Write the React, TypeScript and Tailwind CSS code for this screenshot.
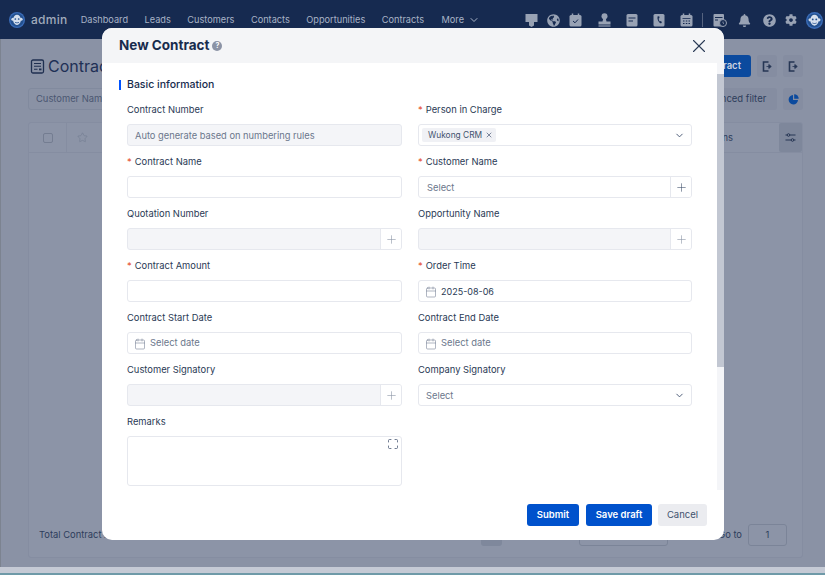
import { useState } from 'react';
import { Calendar, ChevronDown, Maximize, Plus, Star, X } from 'lucide-react';
import { FaBell, FaCog, FaGlobeAmericas, FaQuestionCircle } from 'react-icons/fa';

const navItems = ['Dashboard', 'Leads', 'Customers', 'Contacts', 'Opportunities', 'Contracts'];

const NAV_ICON = '#98a2b4';
const NAV_BG = '#162a50';

function MonkeyLogo({ size, className }: { size: number; className?: string }) {
  return (
    <svg width={size} height={size} viewBox="0 0 24 24" className={`shrink-0 ${className ?? ''}`}>
      <circle cx="12" cy="12" r="12" fill="#3a6cb8" />
      <circle cx="12" cy="12" r="10" fill="#23508f" />
      <circle cx="5.800" cy="11" r="2.300" fill="#d5dfee" />
      <circle cx="18.200" cy="11" r="2.300" fill="#d5dfee" />
      <path d="M6.500 10c0-3.500 2.500-6 5.500-6s5.500 2.500 5.500 6c1 3-.5 8.500-5.500 9.500-5-1-6.500-6.500-5.500-9.500z" fill="#d5dfee" />
      <circle cx="9.500" cy="10.500" r="1.300" fill="#23508f" />
      <circle cx="14.500" cy="10.500" r="1.300" fill="#23508f" />
      <path d="M9 15.500c2 1 4 1 6 0" stroke="#23508f" strokeWidth="1.200" fill="none" />
    </svg>
  );
}

function PinIcon({ className }: { className?: string }) {
  return (
    <svg width="13" height="14" viewBox="0 0 13 14" className={className}>
      <path d="M.5 1h12v8H9v3.500L6.500 14 4 12.500V9H.5z" fill={NAV_ICON} />
    </svg>
  );
}

function CalendarCheckIcon({ className }: { className?: string }) {
  return (
    <svg width="13" height="14" viewBox="0 0 13 14" className={className}>
      <rect x="0.500" y="2" width="12" height="11.500" rx="1.500" fill={NAV_ICON} />
      <path d="M3.500 .5v3M9.500 .5v3" stroke={NAV_ICON} strokeWidth="1.500" />
      <path d="M4 8l2 1.800L9 6.500" stroke={NAV_BG} strokeWidth="1" fill="none" />
    </svg>
  );
}

function StampIcon({ className }: { className?: string }) {
  return (
    <svg width="13" height="14" viewBox="0 0 13 14" className={className}>
      <circle cx="6.500" cy="3.200" r="3" fill={NAV_ICON} />
      <path d="M5.200 5.500h2.600L8.500 8.500H12.500v3H.5v-3h4z" fill={NAV_ICON} />
      <path d="M.5 13h12" stroke={NAV_ICON} strokeWidth="1.200" />
    </svg>
  );
}

function NoteIcon({ className }: { className?: string }) {
  return (
    <svg width="12" height="14" viewBox="0 0 12 14" className={className}>
      <rect x="0.500" y="1" width="11" height="12.500" rx="1.500" fill={NAV_ICON} />
      <path d="M2.500 5h7M2.500 8h4.500" stroke={NAV_BG} strokeWidth="1.200" />
    </svg>
  );
}

function PhoneBookIcon({ className }: { className?: string }) {
  return (
    <svg width="12" height="14" viewBox="0 0 12 14" className={className}>
      <rect x="0.500" y="1" width="11" height="12.500" rx="1.500" fill={NAV_ICON} />
      <path d="M4.500 3.500c-.5 3 1 6 3.500 7l1-1.500-1.500-1-.8.500c-.7-.8-1-1.800-1-3l.8-.4-.3-1.800z" fill={NAV_BG} />
    </svg>
  );
}

function CalendarGridIcon({ className }: { className?: string }) {
  return (
    <svg width="13" height="14" viewBox="0 0 13 14" className={className}>
      <rect x="0.500" y="2" width="12" height="11.500" rx="1.500" fill={NAV_ICON} />
      <path d="M3.500 .5v3M9.500 .5v3" stroke={NAV_ICON} strokeWidth="1.500" />
      <path d="M2.500 5.500h8" stroke={NAV_BG} strokeWidth=".8" />
      <path d="M3 8h1.500M5.800 8h1.500M8.500 8h1.500M3 10.500h1.500M5.800 10.500h1.500M8.500 10.500h1.500" stroke={NAV_BG} strokeWidth="1" />
    </svg>
  );
}

function ScheduleDocIcon({ className }: { className?: string }) {
  return (
    <svg width="14" height="14" viewBox="0 0 14 14" className={className}>
      <rect x="0.500" y="1" width="10.500" height="12.500" rx="1" fill={NAV_ICON} />
      <path d="M2 4.500h7.500M2 7h3" stroke={NAV_BG} strokeWidth="1" />
      <circle cx="10" cy="10" r="3.500" fill={NAV_BG} stroke={NAV_ICON} strokeWidth="1" />
      <path d="M10 8.500V10l1 .8" stroke={NAV_ICON} strokeWidth=".8" fill="none" />
    </svg>
  );
}

function ContractDocIcon() {
  return (
    <svg width="15" height="15" viewBox="0 0 15 15" className="shrink-0">
      <rect x="1.500" y="1" width="12" height="13" rx="1.500" fill="none" stroke="#1f2f50" strokeWidth="1.300" />
      <path d="M4 4.500h7M4 7.300h7M4 10.200h3.500" stroke="#1f2f50" strokeWidth="1.100" />
      <rect x="9" y="9.500" width="2.500" height="1.800" fill="#1f2f50" />
    </svg>
  );
}

function ExportIcon() {
  return (
    <svg width="11" height="11" viewBox="0 0 11 11">
      <path d="M6.500 1H1.500v9h5" fill="none" stroke="#263654" strokeWidth="1.600" />
      <path d="M4.500 5.500h3M6.800 3.500l2.500 2-2.500 2z" fill="#263654" stroke="#263654" strokeWidth=".8" />
    </svg>
  );
}

function PieIcon() {
  return (
    <svg width="11" height="11" viewBox="0 0 11 11">
      <path d="M5 1a4.700 4.700 0 1 0 5 5H5z" fill="#0b4a9e" />
      <path d="M6.200 0.300a4.500 4.500 0 0 1 4.500 4.500H6.200z" fill="#0b4a9e" />
    </svg>
  );
}

function SlidersIcon() {
  return (
    <svg width="11" height="11" viewBox="0 0 11 11" fill="none" stroke="#263654" strokeWidth="1">
      <path d="M.5 3h10M.5 8h10" />
      <circle cx="3.500" cy="3" r="1.300" fill="#7e879b" />
      <circle cx="7.500" cy="8" r="1.300" fill="#7e879b" />
    </svg>
  );
}

function Label({ text, required }: { text: string; required?: boolean }) {
  return (
    <div className="h-[15px] mb-[6px] text-[9.400px] leading-[14px] text-[#2a3a55] whitespace-nowrap">
      {required && <span className="text-[#e5532d] mr-[3px]">*</span>}
      {text}
    </div>
  );
}

function PlusAddon({ dark }: { dark?: boolean }) {
  return (
    <div className="w-[21px] h-full flex items-center justify-center bg-white border-l border-[#e6e8ee] shrink-0">
      <Plus size={13} strokeWidth={1.100} className={dark ? 'text-[#42526e]' : 'text-[#8a94a6]'} />
    </div>
  );
}

function Field({ className, children }: { className?: string; children?: React.ReactNode }) {
  return (
    <div className={`h-[22px] rounded-[3px] border border-[#e6e8ee] flex items-center overflow-hidden ${className ?? 'bg-white'}`}>
      {children}
    </div>
  );
}

function DateField({ value }: { value?: string }) {
  return (
    <Field>
      <Calendar size={12} strokeWidth={1.200} className="ml-[6px] mt-[1px] text-[#7a8598]" />
      <span className={`ml-[4px] mt-[1px] ${value ? 'text-[9px] text-[#2a3a55]' : 'text-[9.400px] text-[#6b778c]'}`}>{value ?? 'Select date'}</span>
    </Field>
  );
}

function FormGrid() {
  const [remarks, setRemarks] = useState('');

  return (
    <div className="grid grid-cols-[275px_274px] gap-x-[16px] gap-y-[9px]">
      <div>
        <Label text="Contract Number" />
        <Field className="bg-[#f4f5f8]">
          <span className="ml-[7px] mt-[1px] text-[9.300px] text-[#6b778c]">Auto generate based on numbering rules</span>
        </Field>
      </div>
      <div>
        <Label text="Person in Charge" required />
        <Field>
          <span className="ml-[3px] h-[14px] pl-[6px] pr-[3px] rounded-[2px] bg-[#f0f1f5] flex items-center gap-[3px] text-[8.400px] text-[#42526e]">
            Wukong CRM <X size={8} />
          </span>
          <ChevronDown size={11} className="ml-auto mr-[6px] text-[#42526e]" />
        </Field>
      </div>

      <div>
        <Label text="Contract Name" required />
        <Field />
      </div>
      <div>
        <Label text="Customer Name" required />
        <Field>
          <span className="ml-[8px] mt-[1px] text-[9.300px] text-[#6b778c] flex-1">Select</span>
          <PlusAddon dark />
        </Field>
      </div>

      <div>
        <Label text="Quotation Number" />
        <Field className="bg-[#f4f5f8] justify-end">
          <PlusAddon />
        </Field>
      </div>
      <div>
        <Label text="Opportunity Name" />
        <Field className="bg-[#f4f5f8] justify-end">
          <PlusAddon />
        </Field>
      </div>

      <div>
        <Label text="Contract Amount" required />
        <Field />
      </div>
      <div>
        <Label text="Order Time" required />
        <DateField value="2025-08-06" />
      </div>

      <div>
        <Label text="Contract Start Date" />
        <DateField />
      </div>
      <div>
        <Label text="Contract End Date" />
        <DateField />
      </div>

      <div>
        <Label text="Customer Signatory" />
        <Field className="bg-[#f4f5f8] justify-end">
          <PlusAddon />
        </Field>
      </div>
      <div>
        <Label text="Company Signatory" />
        <Field>
          <span className="ml-[7px] mt-[1px] text-[9.300px] text-[#6b778c]">Select</span>
          <ChevronDown size={11} className="ml-auto mr-[6px] text-[#42526e]" />
        </Field>
      </div>

      <div>
        <Label text="Remarks" />
        <div className="relative h-[50px] rounded-[3px] border border-[#e6e8ee]">
          <textarea
            value={remarks}
            onChange={(e) => setRemarks(e.target.value)}
            className="block w-full h-full resize-none outline-none text-[10px] p-[6px]"
          />
          <Maximize size={12} strokeWidth={1.500} className="absolute top-[1px] right-[2px] text-[#42526e]" />
        </div>
      </div>
    </div>
  );
}

function NewContractDialog() {
  return (
    <div className="absolute left-[102px] top-[28px] w-[622px] h-[512px] bg-white rounded-[10px] overflow-hidden flex flex-col">
      {/* Header */}
      <div className="h-[35px] shrink-0 bg-[#f4f5f7] flex items-center pl-[17px] pr-[14px]">
        <span className="text-[13.500px] font-bold text-[#172b4d]">New Contract</span>
        <span className="ml-[3px] mt-[1px] w-[10px] h-[10px] rounded-full bg-[#8b93a5] text-white text-[7px] font-bold flex items-center justify-center">?</span>
        <X size={22} strokeWidth={1.200} className="ml-auto text-[#2a3a55]" />
      </div>

      {/* Body with scrollbar */}
      <div className="h-[427px] shrink-0 flex">
        <div className="flex-1 pl-[17px] pt-[15px]">
          <div className="flex items-center h-[13px] mb-[12px]">
            <div className="w-[2px] h-[10px] bg-[#0052ff] mr-[6px]" />
            <span className="text-[10.500px] font-medium text-[#172b4d]">Basic information</span>
          </div>
          <div className="ml-[8px]">
            <FormGrid />
          </div>
        </div>
        <div className="w-[7px] bg-[#f4f5f8]">
          <div className="mt-[11px] h-[293px] bg-[#c2c7d2]" />
        </div>
      </div>

      {/* Footer */}
      <div className="flex-1 flex items-start justify-end pr-[17px] pt-[14px]">
        <button className="w-[52px] h-[22px] rounded-[3px] bg-[#0052cc] text-white text-[9.500px] font-semibold">Submit</button>
        <button className="ml-[7px] w-[66px] h-[22px] rounded-[3px] bg-[#0052cc] text-white text-[9.500px] font-semibold">Save draft</button>
        <button className="ml-[6px] w-[49px] h-[22px] rounded-[3px] bg-[#ebecf0] text-[#42526e] text-[9.500px]">Cancel</button>
      </div>
    </div>
  );
}

function TopNav() {
  return (
    <div className="h-[39px] shrink-0 bg-[#162a50] flex items-center pl-[9px] pr-[2px] pt-[1px]">
      <MonkeyLogo size={16} />
      <span className="ml-[6px] text-[12px] font-medium text-[#a0aabb] tracking-[0.3px]">admin</span>
      <div className="ml-[13px] flex gap-[16.500px] text-[9.200px] text-[#a8b3c6]">
        {navItems.map((item) => (
          <span key={item}>{item}</span>
        ))}
        <span className="flex items-center gap-[4px] ml-[1px]">
          More <ChevronDown size={12} />
        </span>
      </div>
      <div className="ml-auto flex items-center">
        <PinIcon />
        <FaGlobeAmericas size={13} color={NAV_ICON} className="ml-[9px]" />
        <CalendarCheckIcon className="ml-[9px]" />
        <StampIcon className="ml-[16px]" />
        <NoteIcon className="ml-[15px]" />
        <PhoneBookIcon className="ml-[15px]" />
        <CalendarGridIcon className="ml-[15px]" />
        <div className="ml-[9px] w-px h-[14px] bg-[#55637f]" />
        <ScheduleDocIcon className="ml-[10px]" />
        <FaBell size={13} color={NAV_ICON} className="ml-[11px]" />
        <FaQuestionCircle size={13} color={NAV_ICON} className="ml-[12px]" />
        <FaCog size={12} color={NAV_ICON} className="ml-[9px]" />
        <MonkeyLogo size={17} className="ml-[9px]" />
      </div>
    </div>
  );
}

function BackgroundPage() {
  return (
    <div className="flex-1 pl-[28px] pr-[22px] text-[#2e3d5c]">
      {/* Title row */}
      <div className="h-[44px] flex items-start justify-between pt-[16px]">
        <div className="flex items-center gap-[3px] -mt-[1px] ml-[2px]">
          <ContractDocIcon />
          <span className="text-[16px] text-[#1f3055]">Contracts</span>
        </div>
        <div className="flex items-center gap-[6px]">
          <div className="h-[22px] px-[10px] rounded-[3px] bg-[#0b4a9e] text-[#c9d2e0] text-[9.500px] font-semibold flex items-center">New Contract</div>
          <div className="w-[20px] h-[22px] rounded-[3px] bg-[#858da1] flex items-center justify-center">
            <ExportIcon />
          </div>
          <div className="w-[20px] h-[22px] rounded-[3px] bg-[#858da1] flex items-center justify-center">
            <ExportIcon />
          </div>
        </div>
      </div>

      {/* Filter row */}
      <div className="h-[39px] flex items-start justify-between pt-[5px]">
        <div className="w-[200px] h-[22px] rounded-[3px] border border-[#818a9e] text-[9.400px] text-[#4a5772] pl-[7px] pt-[1px] flex items-center">Customer Name</div>
        <div className="flex items-center gap-[6px]">
          <div className="w-[90px] h-[22px] rounded-[3px] bg-[#858da1] text-[9.500px] flex items-center justify-center">Advanced filter</div>
          <div className="w-[20px] h-[22px] rounded-[3px] bg-[#858da1] flex items-center justify-center">
            <PieIcon />
          </div>
        </div>
      </div>

      {/* Table card */}
      <div className="h-[436px] rounded-[3px] border border-[#858da1] bg-[#8c94a7] flex flex-col">
        <div className="h-[30px] shrink-0 flex items-center justify-between border-b border-[#858da1]">
          <div className="flex items-center h-full">
            <div className="w-[38px] h-full flex items-center justify-center border-r border-[#858da1]">
              <div className="w-[10px] h-[10px] rounded-[2px] border border-[#747d91]" />
            </div>
            <div className="w-[30px] flex justify-center">
              <Star size={11} className="text-[#7a8397]" />
            </div>
          </div>
          <div className="flex items-center">
            <span className="text-[9.400px] mt-[2px] mr-[46px]">Actions</span>
            <div className="w-[23px] h-[29px] rounded-[2px] bg-[#7e879b] flex items-center justify-center">
              <SlidersIcon />
            </div>
          </div>
        </div>
        <div className="mt-auto mb-[11px] flex items-center pl-[10px] pr-[15px] text-[9.400px]">
          <span className="w-[442px] mt-[1px] whitespace-nowrap overflow-hidden">Total Contract Amount: 0.00, Received Amount: 0.00, Pending Amount: 0.00</span>
          <span className="w-[21px] h-[22px] rounded-[3px] bg-[#7f889c] flex items-center justify-center">1</span>
          <span className="ml-[77px] w-[89px] h-[22px] rounded-[3px] border border-[#7b8498] flex items-center pl-[8px]">15/page</span>
          <span className="ml-auto flex items-center gap-[6px]">
            Go to
            <span className="w-[39px] h-[22px] rounded-[3px] border border-[#7b8498] flex items-center justify-center">1</span>
          </span>
        </div>
      </div>
    </div>
  );
}

export default function App() {
  return (
    <div className="relative w-[825px] h-[575px] overflow-hidden bg-[#8a92a5] shadow-[inset_1px_0_0_#7c8390] flex flex-col font-['Inter',sans-serif]">
      <TopNav />
      <BackgroundPage />
      <div className="h-[8px] shrink-0 bg-[#c5cad5] border-b-2 border-[#6f9aa8]" />
      <NewContractDialog />
    </div>
  );
}
